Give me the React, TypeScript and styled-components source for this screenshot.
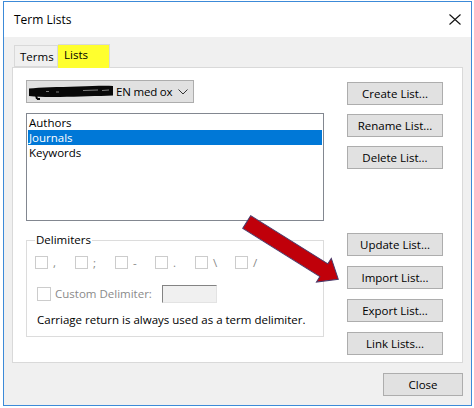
import React from "react";
import styled, { createGlobalStyle } from "styled-components";

const GlobalStyle = createGlobalStyle`
  html, body {
    margin: 0;
    padding: 0;
    background: #ffffff;
  }
  body {
    font-family: "Open Sans", "Noto Sans", sans-serif;
    font-size: 11.5px;
    color: #000;
  }
`;

const Page = styled.div`
  position: relative;
  width: 474px;
  height: 408px;
  padding: 1px 0 0 3px;
  box-sizing: border-box;
`;

const Window = styled.div`
  width: 469px;
  height: 405px;
  box-sizing: border-box;
  border: 1px solid #3c8ad8;
  background: #f0f0f0;
  display: flex;
  flex-direction: column;
`;

const TitleBar = styled.div`
  height: 35px;
  background: #fff;
  display: flex;
  align-items: center;
  justify-content: space-between;
  padding: 0 10px 0 10px;
  font-size: 12px;
`;

const Body = styled.div`
  flex: 1;
  padding: 7px 8px 8px 8px;
  display: flex;
  flex-direction: column;
`;

const TabStrip = styled.div`
  display: flex;
  align-items: flex-end;
  height: 23px;
  padding-left: 2px;
`;

const Tab = styled.div<{ $active?: boolean }>`
  box-sizing: border-box;
  height: ${(p) => (p.$active ? "24px" : "22px")};
  margin-bottom: ${(p) => (p.$active ? "-1px" : "0")};
  padding: ${(p) => (p.$active ? "1px 6px 0 6px" : "2px 6px 0 5px")};
  border: 1px solid #d9d9d9;
  border-bottom: ${(p) => (p.$active ? "none" : "1px solid #d9d9d9")};
  border-left: ${(p) => (p.$active ? "none" : "1px solid #d9d9d9")};
  background: ${(p) => (p.$active ? "#ffff2e" : "#f0f0f0")};
  width: ${(p) => (p.$active ? "52px" : "44px")};
  line-height: 18px;
  position: relative;
  z-index: ${(p) => (p.$active ? 1 : 0)};
`;

const Panel = styled.div`
  height: 296px;
  box-sizing: border-box;
  border: 1px solid #d9d9d9;
  background: #fff;
  padding: 12px 19px 0 13px;
  display: flex;
  gap: 23px;
`;

const LeftCol = styled.div`
  width: 298px;
  display: flex;
  flex-direction: column;
`;

const Combo = styled.div`
  width: 168px;
  height: 23px;
  box-sizing: border-box;
  background: #e1e1e1;
  border: 1px solid #adadad;
  display: flex;
  align-items: center;
  padding: 0 5px 0 1px;
`;

const Scribble = styled.svg`
  flex: none;
`;

const ComboText = styled.span`
  margin-left: 2px;
  white-space: nowrap;
  letter-spacing: -0.2px;
`;

const Chevron = styled.svg`
  margin-left: auto;
  flex: none;
`;

const ListBox = styled.div`
  margin-top: 10px;
  height: 108px;
  box-sizing: border-box;
  border: 1px solid #828790;
  padding: 1px;
`;

const ListItem = styled.div<{ $selected?: boolean }>`
  height: 15px;
  line-height: 15px;
  padding-left: 1px;
  background: ${(p) => (p.$selected ? "#0078d7" : "transparent")};
  color: ${(p) => (p.$selected ? "#fff" : "#000")};
`;

const Group = styled.fieldset`
  margin: 11px 0 0 0;
  padding: 0 8px 8px 8px;
  border: 1px solid #dcdcdc;
  min-width: 0;
`;

const Legend = styled.legend`
  padding: 0 1px;
  margin-left: 0;
  line-height: 16px;
`;

const CheckRow = styled.div`
  display: flex;
  margin-top: 8px;
  height: 13px;
  align-items: center;
`;

const CheckItem = styled.div`
  width: 40px;
  display: flex;
  align-items: center;
  gap: 5px;
  color: #8a8a8a;
`;

const Box = styled.span<{ $size?: number }>`
  width: ${(p) => p.$size ?? 13}px;
  height: ${(p) => p.$size ?? 13}px;
  box-sizing: border-box;
  border: 1px solid #cccccc;
  background: #fff;
  flex: none;
`;

const CustomRow = styled.div`
  display: flex;
  align-items: center;
  height: 19px;
  margin-top: 15px;
  padding-left: 2px;
`;

const DisabledLabel = styled.span`
  color: #8a8a8a;
  margin-left: 4px;
  width: 107px;
`;

const DisabledInput = styled.span`
  width: 55px;
  height: 18px;
  box-sizing: border-box;
  background: #f0f0f0;
  border: 1px solid #e3e3e3;
  border-top-color: #838383;
  border-left-color: #838383;
`;

const Note = styled.div`
  margin-top: 9px;
  line-height: 16px;
  padding-left: 2px;
`;

const RightCol = styled.div`
  width: 96px;
  padding-top: 2px;
  display: flex;
  flex-direction: column;
`;

const ButtonGroup = styled.div<{ $gap: number; $top?: number }>`
  display: flex;
  flex-direction: column;
  gap: ${(p) => p.$gap}px;
  margin-top: ${(p) => p.$top ?? 0}px;
`;

const Button = styled.div<{ $width?: number }>`
  width: ${(p) => p.$width ?? 96}px;
  height: 23px;
  box-sizing: border-box;
  background: #e1e1e1;
  border: 1px solid #adadad;
  display: flex;
  align-items: center;
  justify-content: center;
`;

const Footer = styled.div`
  display: flex;
  justify-content: flex-end;
  margin-top: 10px;
`;

const Arrow = styled.svg`
  position: absolute;
  left: 0;
  top: 0;
  pointer-events: none;
`;

const delimiters = [",", ";", "-", ".", "\\", "/"];
const listNames = ["Authors", "Journals", "Keywords"];
const topButtons = ["Create List...", "Rename List...", "Delete List..."];
const bottomButtons = ["Update List...", "Import List...", "Export List...", "Link Lists..."];

export default function App() {
  return (
    <>
      <GlobalStyle />
      <Page>
        <Window>
          <TitleBar>
            <span>Term Lists</span>
            <svg width="12" height="11" viewBox="0 0 12 11">
              <path d="M0.5 0.5 L11.5 10.5 M11.5 0.5 L0.5 10.5" stroke="#111" strokeWidth="1.1" fill="none" />
            </svg>
          </TitleBar>
          <Body>
            <TabStrip>
              <Tab>Terms</Tab>
              <Tab $active>Lists</Tab>
            </TabStrip>
            <Panel>
              <LeftCol>
                <Combo>
                  {/* redaction scribble over the list name */}
                  <Scribble width="86" height="17" viewBox="0 0 86 17">
                    <path
                      d="M1 5.5 C12 4.5 30 4 50 3.5 C65 3 76 2.5 85 3 L85 12.5 C70 13 50 13.5 32 14 C20 14.3 10 14 1 13 Z"
                      fill="#080808"
                    />
                    <path d="M8 12 L9 16 M9 16 L12 16" stroke="#080808" strokeWidth="2" fill="none" />
                    <path d="M18 8.5 L21 8.5 M28 9 L31 9 M55 7.5 L70 7 M74 7.5 L81 7" stroke="#9a9a9a" strokeWidth="0.8" fill="none" />
                  </Scribble>
                  <ComboText>EN med ox</ComboText>
                  <Chevron width="10" height="6" viewBox="0 0 10 6">
                    <path d="M0.5 0.5 L5 5 L9.5 0.5" stroke="#333" strokeWidth="1" fill="none" />
                  </Chevron>
                </Combo>
                <ListBox>
                  {listNames.map((n) => (
                    <ListItem key={n} $selected={n === "Journals"}>
                      {n}
                    </ListItem>
                  ))}
                </ListBox>
                <Group>
                  <Legend>Delimiters</Legend>
                  <CheckRow>
                    {delimiters.map((d) => (
                      <CheckItem key={d}>
                        <Box />
                        <span>{d}</span>
                      </CheckItem>
                    ))}
                  </CheckRow>
                  <CustomRow>
                    <Box $size={14} />
                    <DisabledLabel>Custom Delimiter:</DisabledLabel>
                    <DisabledInput />
                  </CustomRow>
                  <Note>Carriage return is always used as a term delimiter.</Note>
                </Group>
              </LeftCol>
              <RightCol>
                <ButtonGroup $gap={9}>
                  {topButtons.map((b) => (
                    <Button key={b}>{b}</Button>
                  ))}
                </ButtonGroup>
                <ButtonGroup $gap={10} $top={64}>
                  {bottomButtons.map((b) => (
                    <Button key={b}>{b}</Button>
                  ))}
                </ButtonGroup>
              </RightCol>
            </Panel>
            <Footer>
              <Button $width={80}>Close</Button>
            </Footer>
          </Body>
        </Window>
        <Arrow width="474" height="408" viewBox="0 0 474 408">
          <g transform="translate(246.7 222) rotate(32)">
            <polygon
              points="0,-7.5 91,-7.5 91,-14 108,0 91,14 91,7.5 0,7.5"
              fill="#c0000a"
              stroke="#4a3a6a"
              strokeWidth="1"
              strokeLinejoin="miter"
            />
          </g>
        </Arrow>
      </Page>
    </>
  );
}
